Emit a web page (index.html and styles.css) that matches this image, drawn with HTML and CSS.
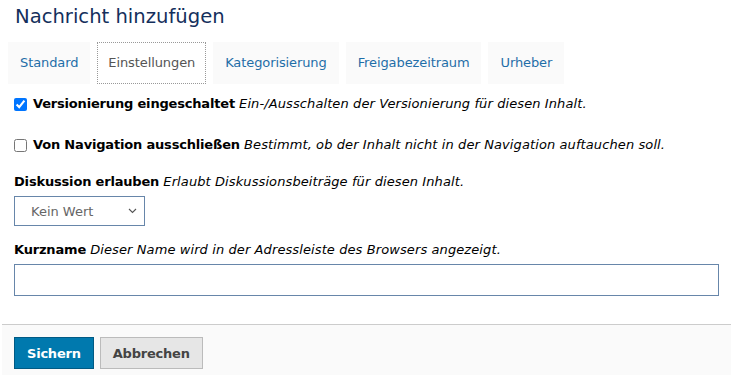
FILE: index.html
```html
<!DOCTYPE html>
<html lang="de">
<head>
<meta charset="utf-8">
<title>Nachricht hinzufügen</title>
<link rel="stylesheet" href="styles.css">
</head>
<body>
<div class="page">
  <h1 class="title">Nachricht hinzufügen</h1>
  <nav class="tabs">
    <a class="tab">Standard</a>
    <a class="tab tab-active">Einstellungen</a>
    <a class="tab">Kategorisierung</a>
    <a class="tab">Freigabezeitraum</a>
    <a class="tab">Urheber</a>
  </nav>
  <div class="field field-check first">
    <input type="checkbox" class="check" id="f1" checked>
    <label for="f1"><b>Versionierung eingeschaltet</b> <i>Ein-/Ausschalten der Versionierung für diesen Inhalt.</i></label>
  </div>
  <div class="field field-check second">
    <input type="checkbox" class="check" id="f2">
    <label for="f2"><b>Von Navigation ausschließen</b> <i>Bestimmt, ob der Inhalt nicht in der Navigation auftauchen soll.</i></label>
  </div>
  <div class="field field-select">
    <label class="lbl"><b>Diskussion erlauben</b> <i>Erlaubt Diskussionsbeiträge für diesen Inhalt.</i></label>
    <div class="select">
      <span class="select-value">Kein Wert</span>
      <svg class="chev" width="9" height="6" viewBox="0 0 9 6"><path d="M1 1l3.5 3.5L8 1" fill="none" stroke="#555" stroke-width="1.1"/></svg>
    </div>
  </div>
  <div class="field field-text">
    <label class="lbl"><b>Kurzname</b> <i>Dieser Name wird in der Adressleiste des Browsers angezeigt.</i></label>
    <div class="input"></div>
  </div>
  <div class="footer">
    <button class="btn btn-primary">Sichern</button>
    <button class="btn btn-secondary">Abbrechen</button>
  </div>
</div>
</body>
</html>
```

FILE: styles.css
```css
* { box-sizing: border-box; }
html, body { margin: 0; background: #fff; }
body {
  font-family: "DejaVu Sans", Verdana, sans-serif;
  font-size: 13px;
  color: #000;
  overflow: hidden;
}
b { letter-spacing: -0.18px; }
i { letter-spacing: 0.1px; }
.page {
  padding: 4px 20px 0 14px;
}
.title {
  margin: 0 0 0 1px;
  font-size: 19.6px;
  font-weight: normal;
  line-height: 26px;
  color: #142f5c;
}
.tabs {
  display: flex;
  gap: 7px;
  margin: 12px 0 0 -6px;
}
.tab {
  display: block;
  height: 42px;
  line-height: 42px;
  padding: 0 12px;
  background: #fafafa;
  color: #1f6ea8;
  font-size: 13px;
  letter-spacing: -0.1px;
  white-space: nowrap;
}
.tab-active {
  background: #fff;
  color: #555;
  border: 1px dotted #999;
  line-height: 40px;
  padding: 0 10px;
}
.field-check {
  display: flex;
  align-items: center;
  line-height: 18px;
}
.field-check.first { margin-top: 11px; }
.field-check.second { margin-top: 23px; }
.check {
  width: 13px;
  height: 13px;
  margin: 0 6px 0 0;
  flex: none;
}
.second .check { accent-color: #777; }
.lbl { display: block; line-height: 18px; }
.field-select { margin-top: 19px; }
.select {
  margin-top: 5px;
  width: 131px;
  height: 30px;
  border: 1px solid #6786aa;
  display: flex;
  align-items: center;
  justify-content: space-between;
  padding: 0 7px 0 16px;
  color: #666;
  font-size: 13px;
}
.chev { display: block; }
.field-text { margin-top: 15px; }
.input {
  margin-top: 5px;
  width: 705px;
  height: 32px;
  border: 1px solid #6786aa;
  background: #fff;
}
.footer {
  margin: 28px -13px 0 -12px;
  border-top: 1px solid #ccc;
  background: #fafafa;
  padding: 12px 12px 20px;
  display: flex;
  gap: 6px;
}
.btn {
  height: 32px;
  font-family: "DejaVu Sans", Verdana, sans-serif;
  font-size: 13px;
  font-weight: bold;
  letter-spacing: -0.22px;
  padding: 0 12px;
  cursor: pointer;
}
.btn-primary {
  background: #0079ae;
  border: 1px solid #005a84;
  color: #fff;
}
.btn-secondary {
  background: #e6e6e6;
  border: 1px solid #bbb;
  color: #444;
}
```
